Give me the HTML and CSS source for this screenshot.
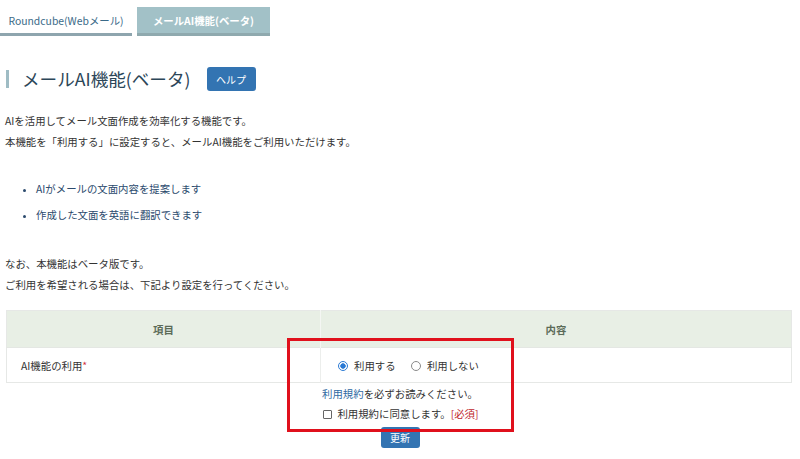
FILE: index.html
```html
<!DOCTYPE html>
<html lang="ja">
<head>
<meta charset="utf-8">
<link rel="stylesheet" href="styles.css">
</head>
<body>
<div class="tabs">
  <div class="tab tab-off">Roundcube(Webメール)</div>
  <div class="tab tab-on">メールAI機能(ベータ)</div>
</div>
<div class="page">
  <div class="title-row">
    <h1 class="title">メールAI機能(ベータ)</h1>
    <span class="help-btn">ヘルプ</span>
  </div>
  <p class="para para-first">AIを活用してメール文面作成を効率化する機能です。<br>本機能を「利用する」に設定すると、メールAI機能をご利用いただけます。</p>
  <ul class="features">
    <li>AIがメールの文面内容を提案します</li>
    <li>作成した文面を英語に翻訳できます</li>
  </ul>
  <p class="para para-note">なお、本機能はベータ版です。<br>ご利用を希望される場合は、下記より設定を行ってください。</p>
  <div class="settings">
    <table class="table">
      <thead>
        <tr><th class="col-item">項目</th><th class="col-value">内容</th></tr>
      </thead>
      <tbody>
        <tr>
          <td class="cell-label">AI機能の利用<span class="req">*</span></td>
          <td class="cell-value">
            <span class="radio radio-on"></span><span class="radio-label">利用する</span>
            <span class="radio"></span><span class="radio-label">利用しない</span>
          </td>
        </tr>
      </tbody>
    </table>
    <div class="terms">
      <div class="terms-line"><span class="link">利用規約</span>を必ずお読みください。</div>
      <div class="terms-line terms-check"><span class="checkbox"></span>利用規約に同意します。<span class="must">[必須]</span></div>
      <span class="submit-btn">更新</span>
    </div>
    <div class="highlight"></div>
  </div>
</div>
</body>
</html>
```

FILE: styles.css
```css
* { box-sizing: border-box; }
html, body { margin: 0; padding: 0; background: #fff; }
body {
  font-family: "Noto Sans CJK JP", "Noto Sans", sans-serif;
  font-size: 10.4px;
  color: #333;
  width: 800px;
  height: 459px;
  overflow: hidden;
}
.tabs {
  display: flex;
  gap: 5px;
  margin-top: 7px;
  height: 29px;
}
.tab {
  display: flex;
  align-items: center;
  justify-content: center;
  height: 29px;
  width: 132px;
  font-size: 10.4px;
}
.tab-off {
  color: #3a6a88;
  border-bottom: 3px solid #8ea5ae;
}
.tab-on {
  width: 133px;
  background: #a2c1c7;
  color: #fff;
  font-weight: bold;
  border-bottom: 3px solid #8fa9ae;
}
.page { padding: 0 6px; position: relative; }
.title-row {
  display: flex;
  align-items: center;
  margin-top: 31px;
  height: 24px;
}
.title {
  margin: 0;
  font-size: 17.6px;
  font-weight: normal;
  color: #2c4658;
  border-left: 3px solid #9fbcc4;
  padding-left: 13px;
  line-height: 18px;
  height: 18px;
  display: flex;
  align-items: center;
}
.help-btn {
  margin-left: 16px;
  background: #3374b2;
  color: #fff;
  font-size: 10px;
  border-radius: 3px;
  width: 49px;
  height: 24px;
  display: flex;
  align-items: center;
  justify-content: center;
}
.para {
  margin: 0;
  line-height: 21px;
  margin-left: -1px;
}
.para-first { margin-top: 19px; }
.features {
  margin: 24px 0 0 0;
  padding-left: 30px;
  line-height: 26px;
  color: #2b4a6d;
}
.features li::marker { font-size: 9px; }
.para-note { margin-top: 25px; }
.settings { position: relative; margin-top: 15px; }
.table {
  width: 786px;
  border-collapse: collapse;
  border: 1px solid #e6e8e6;
}
.table th {
  background: #e8efe5;
  color: #5b6b58;
  font-weight: bold;
  height: 37px;
  text-align: center;
  font-size: 10.4px;
}
.col-item { width: 314px; border-right: 1px solid #f4f6f3; }
.table td {
  height: 35px;
  border-top: 1px solid #e4e7e3;
}
.cell-label { padding-left: 14px; border-right: 1px solid #eceeec; }
.req { color: #d0343a; }
.cell-value { padding-left: 17px; }
.radio {
  display: inline-block;
  width: 10px;
  height: 10px;
  border: 1px solid #8a8a8a;
  border-radius: 50%;
  vertical-align: -1px;
  margin-right: 6px;
}
.radio-on {
  border-color: #2a7ad4;
  background: radial-gradient(circle, #2a7ad4 0 2.4px, #fff 3px);
}
.radio-label { margin-right: 13px; }
.terms {
  display: flex;
  flex-direction: column;
  align-items: center;
  margin-top: 1px;
}
.terms-line { line-height: 19px; height: 20px; }
.link { color: #2f6aa3; }
.terms-check { padding-left: 2px; }
.checkbox {
  display: inline-block;
  width: 9px;
  height: 9px;
  border: 1px solid #666;
  border-radius: 1px;
  margin-right: 5px;
  vertical-align: -1px;
}
.must { color: #c0262d; }
.submit-btn {
  margin-top: 3px;
  width: 39px;
  height: 21px;
  background: #3374b2;
  color: #fff;
  font-size: 10px;
  border-radius: 3px;
  display: flex;
  align-items: center;
  justify-content: center;
}
.highlight {
  position: absolute;
  left: 281px;
  top: 28px;
  width: 227px;
  height: 94px;
  border: 3px solid #e0101c;
}
```
